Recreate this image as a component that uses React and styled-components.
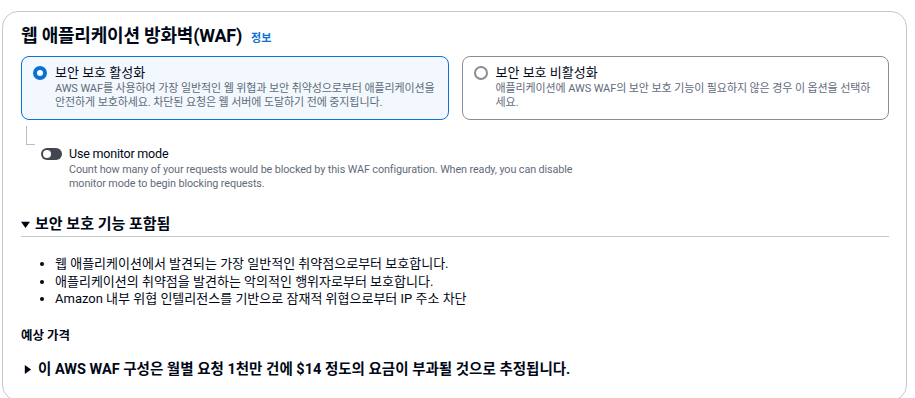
import React from "react";
import styled, { createGlobalStyle } from "styled-components";

const GlobalStyle = createGlobalStyle`
  html, body { margin: 0; padding: 0; background: #ffffff; }
  body {
    font-family: Roboto, "Noto Sans CJK KR", sans-serif;
    color: #000716;
  }
`;

const Page = styled.div`
  padding: 11px 8px 0 2px;
`;

const Card = styled.section`
  border: 1px solid #c6c6cd;
  border-radius: 16px;
  padding: 13px 17px 20px 18px;
  min-height: 350px;
`;

const TitleRow = styled.div`
  display: flex;
  align-items: baseline;
  gap: 9px;
`;

const Title = styled.h2`
  margin: 0;
  font-size: 18px;
  line-height: 22px;
  font-weight: 700;
  letter-spacing: -0.2px;
`;

const InfoLink = styled.a`
  color: #0972d3;
  font-size: 11px;
  font-weight: 700;
  text-decoration: none;
`;

const Tiles = styled.div`
  display: grid;
  grid-template-columns: 1fr 1fr;
  gap: 13px;
  margin-top: 9px;
`;

const Tile = styled.label`
  display: flex;
  gap: 8px;
  padding: 7px 10px 9px 11px;
  border: 1px solid ${(p) => (p.$selected ? "#0972d3" : "#8c8c94")};
  background: ${(p) => (p.$selected ? "#f2f8fd" : "#ffffff")};
  border-radius: 8px;
  min-height: 45px;
`;

const Radio = styled.span`
  flex: none;
  box-sizing: border-box;
  width: 14px;
  height: 14px;
  margin-top: 2px;
  border-radius: 50%;
  background: #ffffff;
  border: ${(p) => (p.$checked ? "4px solid #0972d3" : "2px solid #8c8c94")};
`;

const TileText = styled.div`
  display: flex;
  flex-direction: column;
`;

const TileLabel = styled.span`
  font-size: 13px;
  line-height: 18px;
  color: #000716;
`;

const TileDesc = styled.span`
  font-size: 11px;
  line-height: 14px;
  color: #5f6b7a;
  letter-spacing: -0.1px;
`;

const Connector = styled.div`
  width: 8px;
  height: 18px;
  margin: 6px 0 0 5px;
  border-left: 1px solid #b6bec9;
  border-bottom: 1px solid #b6bec9;
`;

const ToggleRow = styled.div`
  display: flex;
  gap: 7px;
  margin-left: 20px;
  margin-top: 0;
`;

const Toggle = styled.span`
  flex: none;
  position: relative;
  width: 21px;
  height: 12px;
  margin-top: 3px;
  border-radius: 6px;
  background: #424650;
`;

const Knob = styled.span`
  position: absolute;
  top: 2px;
  left: 2px;
  width: 8px;
  height: 8px;
  border-radius: 50%;
  background: #ffffff;
`;

const ToggleText = styled.div`
  display: flex;
  flex-direction: column;
`;

const ToggleLabel = styled.span`
  font-size: 12.5px;
  line-height: 18px;
  letter-spacing: -0.2px;
`;

const ToggleDesc = styled.span`
  font-size: 10.8px;
  line-height: 14px;
  color: #5f6b7a;
  letter-spacing: -0.1px;
  max-width: 515px;
`;

const SectionHeader = styled.div`
  display: flex;
  align-items: center;
  gap: 5px;
  margin-top: 23px;
  padding: 0 0 2px 0;
  border-bottom: 1px solid #c6c6cd;
  font-size: 15px;
  font-weight: 700;
  line-height: 20px;
`;

const Caret = styled.svg`
  width: 9px;
  height: 9px;
  flex: none;
  fill: #000716;
`;

const List = styled.ul`
  margin: 18px 0 0 0;
  padding-left: 34px;
  list-style: none;
  font-size: 13px;
  line-height: 17.5px;
  color: #000716;
`;

const Item = styled.li`
  position: relative;
  &::before {
    content: "";
    position: absolute;
    left: -15px;
    top: 7px;
    width: 4px;
    height: 4px;
    border-radius: 50%;
    background: #000716;
  }
`;

const SubHeading = styled.div`
  margin-top: 20px;
  font-size: 12.5px;
  font-weight: 700;
  line-height: 16px;
`;

const Estimate = styled.div`
  display: flex;
  align-items: center;
  gap: 6px;
  margin-top: 16px;
  padding-left: 2px;
  font-size: 14.5px;
  font-weight: 700;
  line-height: 20px;
`;

export default function App() {
  return (
    <>
      <GlobalStyle />
      <Page>
        <Card>
          <TitleRow>
            <Title>웹 애플리케이션 방화벽(WAF)</Title>
            <InfoLink href="#">정보</InfoLink>
          </TitleRow>
          <Tiles>
            <Tile $selected>
              <Radio $checked />
              <TileText>
                <TileLabel>보안 보호 활성화</TileLabel>
                <TileDesc>
                  AWS WAF를 사용하여 가장 일반적인 웹 위협과 보안 취약성으로부터 애플리케이션을
                  안전하게 보호하세요. 차단된 요청은 웹 서버에 도달하기 전에 중지됩니다.
                </TileDesc>
              </TileText>
            </Tile>
            <Tile>
              <Radio />
              <TileText>
                <TileLabel>보안 보호 비활성화</TileLabel>
                <TileDesc>
                  애플리케이션에 AWS WAF의 보안 보호 기능이 필요하지 않은 경우 이 옵션을 선택하
                  세요.
                </TileDesc>
              </TileText>
            </Tile>
          </Tiles>
          <Connector />
          <ToggleRow>
            <Toggle>
              <Knob />
            </Toggle>
            <ToggleText>
              <ToggleLabel>Use monitor mode</ToggleLabel>
              <ToggleDesc>
                Count how many of your requests would be blocked by this WAF configuration. When
                ready, you can disable monitor mode to begin blocking requests.
              </ToggleDesc>
            </ToggleText>
          </ToggleRow>
          <SectionHeader>
            <Caret viewBox="0 0 10 10">
              <path d="M0 2 L10 2 L5 9 Z" />
            </Caret>
            보안 보호 기능 포함됨
          </SectionHeader>
          <List>
            <Item>웹 애플리케이션에서 발견되는 가장 일반적인 취약점으로부터 보호합니다.</Item>
            <Item>애플리케이션의 취약점을 발견하는 악의적인 행위자로부터 보호합니다.</Item>
            <Item>Amazon 내부 위협 인텔리전스를 기반으로 잠재적 위협으로부터 IP 주소 차단</Item>
          </List>
          <SubHeading>예상 가격</SubHeading>
          <Estimate>
            <Caret viewBox="0 0 10 10">
              <path d="M2 0 L9 5 L2 10 Z" />
            </Caret>
            이 AWS WAF 구성은 월별 요청 1천만 건에 $14 정도의 요금이 부과될 것으로 추정됩니다.
          </Estimate>
        </Card>
      </Page>
    </>
  );
}
